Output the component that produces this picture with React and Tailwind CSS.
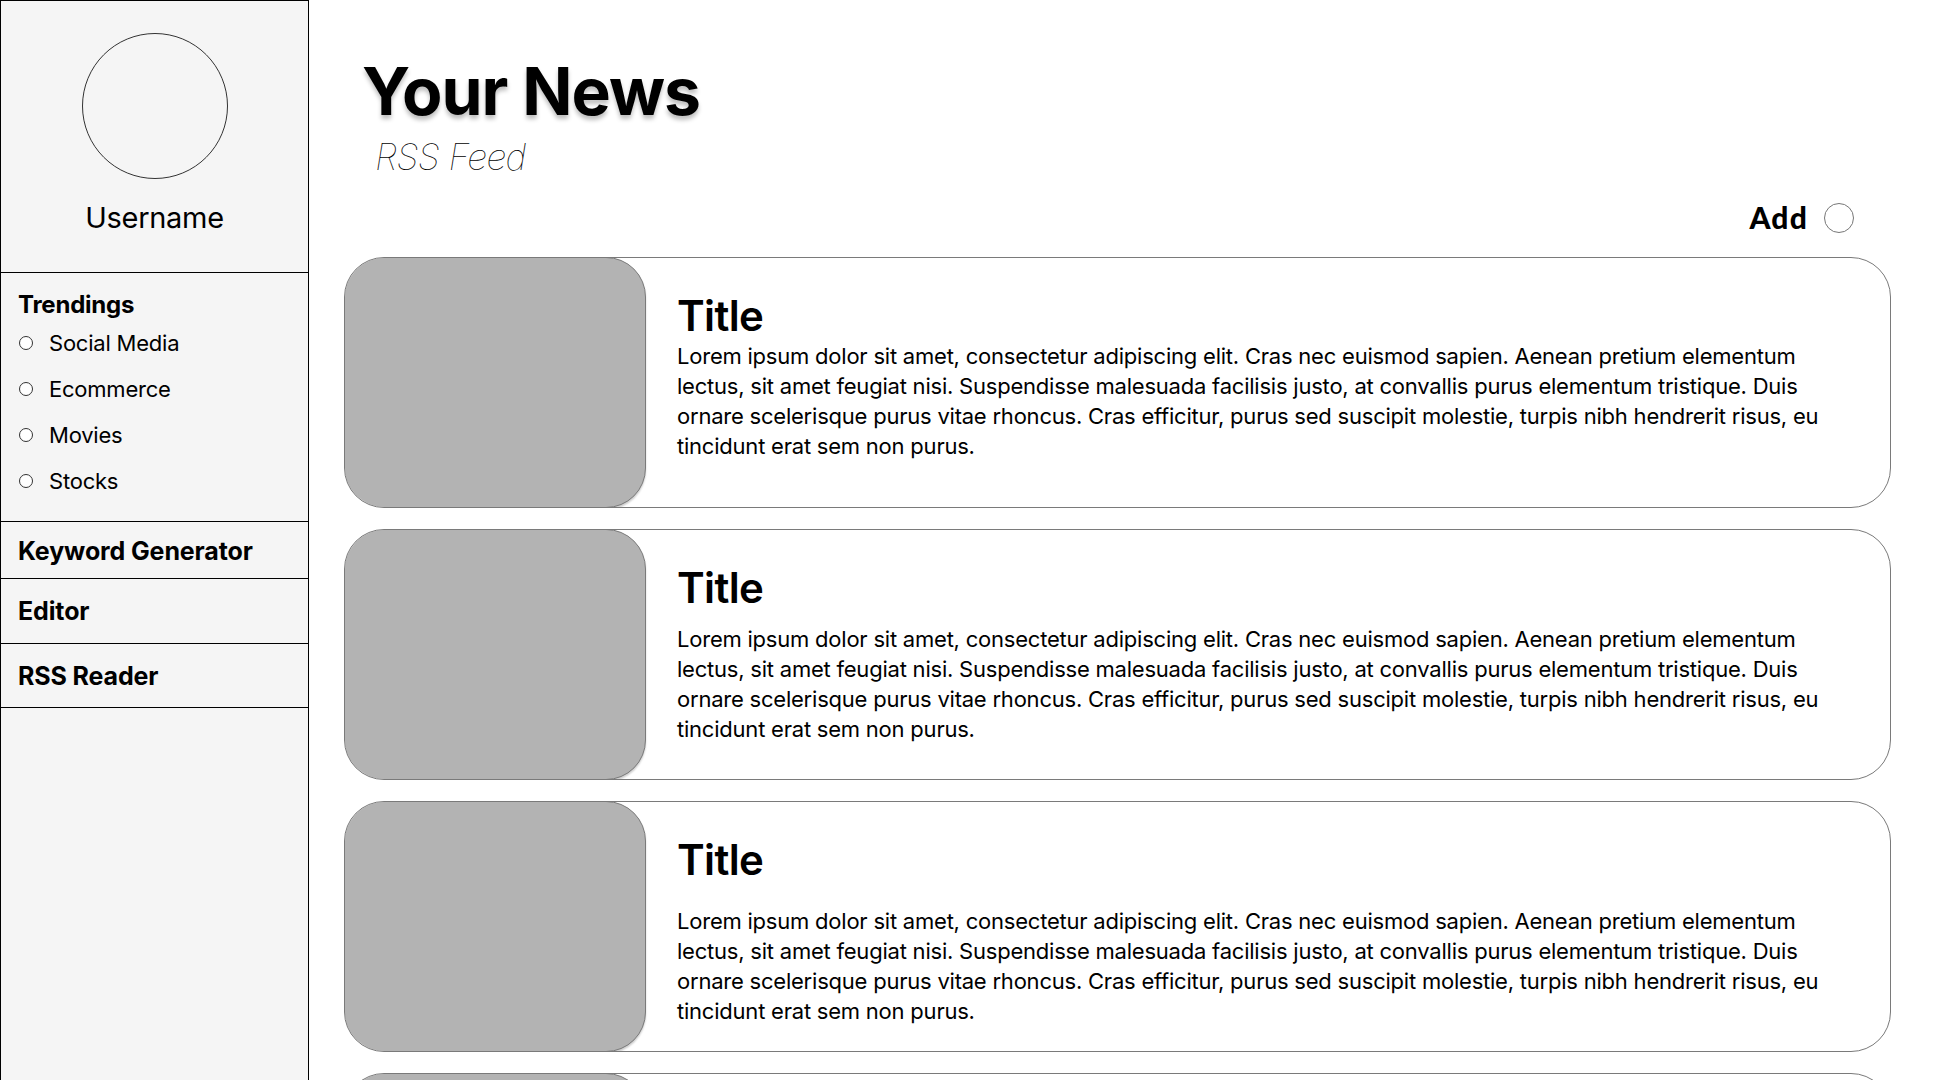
import React from 'react';

const LOREM =
  'Lorem ipsum dolor sit amet, consectetur adipiscing elit. Cras nec euismod sapien. Aenean pretium elementum lectus, sit amet feugiat nisi. Suspendisse malesuada facilisis justo, at convallis purus elementum tristique. Duis ornare scelerisque purus vitae rhoncus. Cras efficitur, purus sed suscipit molestie, turpis nibh hendrerit risus, eu tincidunt erat sem non purus.';

const trendings = ['Social Media', 'Ecommerce', 'Movies', 'Stocks'];

// spacing between title and body differs a bit per card in the mockup
const cards = [
  { id: 1, gap: 'mt-0' },
  { id: 2, gap: 'mt-[11px]' },
  { id: 3, gap: 'mt-[21px]' },
  { id: 4, gap: 'mt-0' },
];

function Sidebar() {
  return (
    <aside className="w-[309px] shrink-0 bg-[#f5f5f5] border-l border-t border-r border-black text-black">
      {/* Profile */}
      <div className="h-[272px] border-b border-black flex flex-col items-center pt-[32px]">
        <div className="w-[146px] h-[146px] rounded-full border border-[#333]" />
        <div className="mt-[21px] text-[29px] leading-[36px] tracking-[-0.01em]">Username</div>
      </div>

      {/* Trendings */}
      <div className="border-b border-black px-[17px] pt-[17px] pb-[17px]">
        <div className="text-[24px] leading-[30px] font-bold tracking-[-0.01em]">Trendings</div>
        {trendings.map((t) => (
          <div key={t} className="h-[46px] flex items-center">
            <span className="w-[14px] h-[14px] rounded-full border border-[#333] bg-white ml-[1px]" />
            <span className="ml-[16px] text-[22px] leading-[30px] tracking-[-0.01em]">{t}</span>
          </div>
        ))}
      </div>

      <div className="h-[57px] border-b border-black px-[17px] flex items-center pt-[3px] text-[25px] font-bold tracking-[-0.005em]">
        Keyword Generator
      </div>
      <div className="h-[65px] border-b border-black px-[17px] flex items-center pt-[2px] text-[25px] font-bold tracking-[-0.005em]">
        Editor
      </div>
      <div className="h-[64px] border-b border-black px-[17px] flex items-center pt-[3px] text-[25px] font-bold tracking-[-0.005em]">
        RSS Reader
      </div>
    </aside>
  );
}

function NewsCard({ gap }) {
  return (
    <div className="h-[251px] shrink-0 flex border border-[#7a7a7a] rounded-[40px] bg-white overflow-hidden">
      <div className="w-[302px] shrink-0 h-[251px] bg-[#b3b3b3] border border-[#7a7a7a] rounded-[40px] -ml-px -mt-px shadow-[0_2px_2px_rgba(0,0,0,0.2)]" />
      <div className="pl-[31px] pr-[50px] pt-[33px]">
        <div className="text-[42px] leading-[50px] font-semibold tracking-[-0.015em]">Title</div>
        <p className={`${gap} text-[22px] leading-[30px] tracking-[-0.01em]`}>{LOREM}</p>
      </div>
    </div>
  );
}

export default function App() {
  return (
    <div className="flex min-h-screen bg-white text-black font-['Inter',sans-serif]">
      <Sidebar />

      <main className="flex-1 pl-[35px] pr-[47px] pt-[58px]">
        <h1 className="ml-[18px] text-[66px] leading-[66px] font-bold tracking-[-0.015em] [text-shadow:0_4px_4px_rgba(0,0,0,0.25)]">
          Your News
        </h1>
        <div className="ml-[31px] mt-[16px] text-[36px] leading-[35px] font-thin italic tracking-[-0.02em]">
          RSS Feed
        </div>

        <div className="mt-[27px] h-[30px] flex items-center justify-end pr-[37px]">
          <span className="font-['Lato',sans-serif] font-black text-[30px] leading-[30px] tracking-[0.04em]">Add</span>
          <span className="ml-[16px] mt-[2px] w-[30px] h-[30px] rounded-full border border-[#777]" />
        </div>

        <div className="mt-[25px] flex flex-col gap-[21px]">
          {cards.map((c) => (
            <NewsCard key={c.id} gap={c.gap} />
          ))}
        </div>
      </main>
    </div>
  );
}
